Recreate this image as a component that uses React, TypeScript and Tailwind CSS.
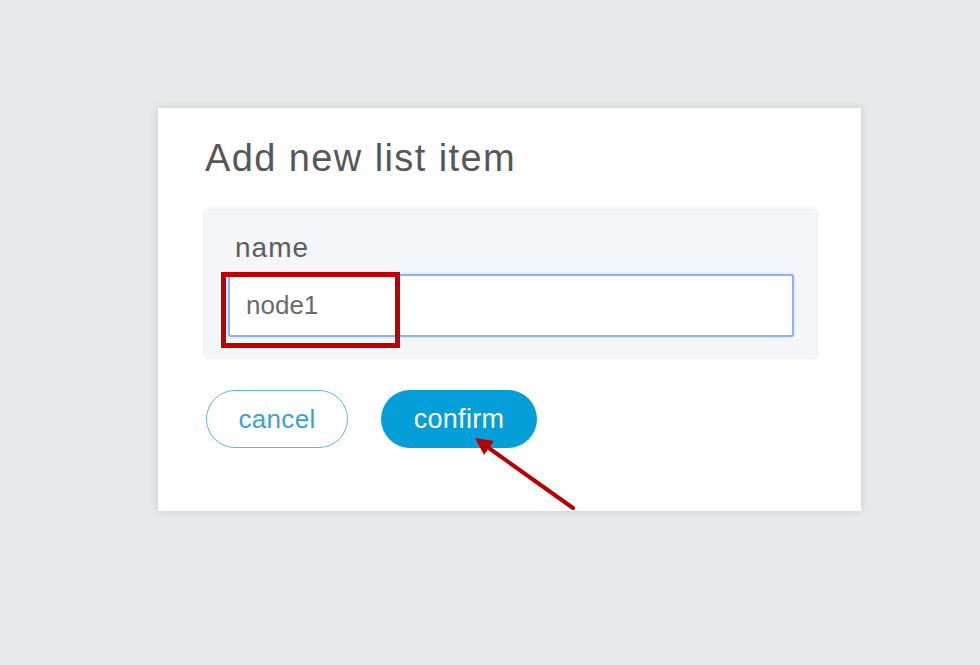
export default function App() {
  return (
    <div
      className="relative min-h-[665px] w-full bg-[#e8e9eb] pl-[158px] pt-[108px]"
      style={{ fontFamily: '"Liberation Sans", Arial, sans-serif' }}
    >
      <div className="flex h-[403px] w-[703px] flex-col bg-white pl-[47px] pt-[31px] shadow-[0_0_8px_rgba(0,0,0,0.14)]">
        <h1 className="text-[38px] leading-none font-normal tracking-[1.4px] text-[#56575a]">
          Add new list item
        </h1>

        <div className="mt-[33px] h-[147px] w-[611px] bg-[#f4f6f9] pl-[23px] pt-[24px] shadow-[0_0_5px_rgba(0,0,0,0.12)]">
          <label className="block pl-[7px] text-[28px] leading-none tracking-[1px] text-[#5c5d60]">
            name
          </label>
          <div className="relative mt-[12px] h-[63px] w-[566px]">
            <input
              readOnly
              value="node1"
              className="h-full w-full rounded-[3px] border-2 border-[#8ab4f8] bg-white pl-[16px] text-[26px] leading-none text-[#6a6b6e] outline-none shadow-[0_0_2px_rgba(138,180,248,0.7)]"
              style={{ fontFamily: '"Liberation Sans", Arial, sans-serif' }}
            />
            {/* annotation box */}
            <div className="pointer-events-none absolute left-[-7px] top-[-2px] h-[76px] w-[179px] border-[5px] border-[#c00000]" />
          </div>
        </div>

        <div className="mt-[33px] flex gap-[33px] pl-[1px]">
          <button className="h-[58px] w-[142px] rounded-full border-[1.5px] border-[#5ab8e4] bg-white text-[26px] leading-none tracking-[0.3px] text-[#3aa2d7]">
            cancel
          </button>
          <button className="h-[58px] w-[156px] rounded-full bg-[#049fd9] text-[27px] leading-none tracking-[0.3px] text-white">
            confirm
          </button>
        </div>
      </div>

      {/* annotation arrow */}
      <svg className="pointer-events-none absolute left-0 top-0" width="980" height="665">
        <line x1="573" y1="508" x2="486" y2="446" stroke="#b80000" strokeWidth="4" strokeLinecap="round" />
        <polygon points="475,438 494,441 484,455" fill="#b80000" />
      </svg>
    </div>
  );
}
